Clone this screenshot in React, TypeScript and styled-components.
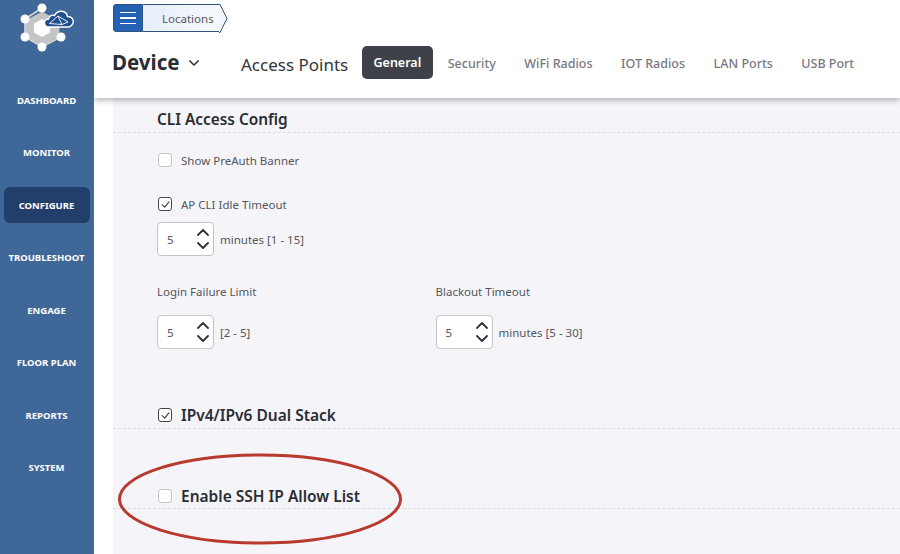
import React from 'react';
import styled, { createGlobalStyle } from 'styled-components';

const GlobalStyle = createGlobalStyle`
  html, body {
    margin: 0;
    padding: 0;
    height: 100%;
    overflow: hidden;
    background: #fff;
    font-family: 'Noto Sans', 'Open Sans', sans-serif;
  }
  * { box-sizing: border-box; }
`;

const NAV_ITEMS = ['DASHBOARD', 'MONITOR', 'CONFIGURE', 'TROUBLESHOOT', 'ENGAGE', 'FLOOR PLAN', 'REPORTS', 'SYSTEM'];
const TABS = ['General', 'Security', 'WiFi Radios', 'IOT Radios', 'LAN Ports', 'USB Port'];

const Logo = () => (
  <svg viewBox="10 0 70 56" width="70" height="56">
    <path d="M42 12 L59 21 L59 37 L42 46 L25 37 L25 21Z" fill="#c4c5c6" stroke="#b4b6b8" strokeWidth="1" />
    <path d="M42 19 L50 23.500 L50 32.500 L42 37 L34 32.500 L34 23.500Z" fill="#fff" />
    <path d="M42 8 L25 19 L25 37 L42 47 L61 37" fill="none" stroke="#d8d9d6" strokeWidth="1.5" />
    <g fill="#fff">
      <circle cx="42" cy="8" r="4.500" />
      <circle cx="25" cy="19" r="4.500" />
      <circle cx="25" cy="37" r="4.500" />
      <circle cx="61" cy="37" r="4.500" />
      <circle cx="42" cy="47" r="4.500" />
    </g>
    <path d="M49 27 C43 27 43 19.500 48.500 19 C49 15.500 52.500 14.500 54.500 15.500 C57.500 9.500 66 10 67.500 16.500 C72.500 16.500 74.500 21 72.500 24 C71.500 26 70 27 68 27 Z" fill="#1f4f8f" stroke="#fff" strokeWidth="1.400" />
    <path d="M49.500 23.500 L58 16 L62 24.500 L49.500 23.500 M58 16 L68 22 L62 24.500" fill="none" stroke="#fff" strokeWidth="0.900" />
  </svg>
);

const Chevron = ({ up }: { up?: boolean }) => (
  <svg viewBox="0 0 12 7" width="12" height="7" fill="none" stroke="#33353a" strokeWidth="1.8" strokeLinecap="round" strokeLinejoin="round">
    <path d={up ? 'M1 6 L6 1 L11 6' : 'M1 1 L6 6 L11 1'} />
  </svg>
);

const Stepper = ({ value }: { value: number }) => (
  <StepperBox>
    <span>{value}</span>
    <StepperArrows>
      <Chevron up />
      <Chevron />
    </StepperArrows>
  </StepperBox>
);

const Check = ({ checked }: { checked?: boolean }) => (
  <CheckBox $checked={checked}>
    {checked && (
      <svg viewBox="0 0 10 8" width="9" height="7" fill="none" stroke="#33353a" strokeWidth="1.2" strokeLinecap="round" strokeLinejoin="round">
        <path d="M1 4 L4 7 L9 1" />
      </svg>
    )}
  </CheckBox>
);

const App = () => (
  <Page>
    <GlobalStyle />
    <Sidebar>
      <LogoWrap><Logo /></LogoWrap>
      <Nav>
        {NAV_ITEMS.map((item) => (
          <NavItem key={item} $active={item === 'CONFIGURE'}>{item}</NavItem>
        ))}
      </Nav>
    </Sidebar>
    <Main>
      <Header>
        <Breadcrumb>
          <MenuButton>
            <span /><span /><span />
          </MenuButton>
          <Crumb>
            Locations
            <svg viewBox="0 0 9 29" width="9" height="29">
              <path d="M0 0.500 L1 0.500 L8 14.500 L1 28.500 L0 28.500" fill="#f2f6fc" stroke="#31527f" strokeWidth="1" />
            </svg>
          </Crumb>
        </Breadcrumb>
        <TabsRow>
          <DeviceTitle>
            Device
            <svg viewBox="0 0 12 7" width="10" height="6" fill="none" stroke="#2b2d33" strokeWidth="1.8" strokeLinecap="round" strokeLinejoin="round">
              <path d="M1 1 L6 6 L11 1" />
            </svg>
          </DeviceTitle>
          <SubTitle>Access Points</SubTitle>
          <Tabs>
            {TABS.map((tab) => (
              <Tab key={tab} $active={tab === 'General'}>{tab}</Tab>
            ))}
          </Tabs>
        </TabsRow>
      </Header>
      <Body>
        <Content>
          <SectionHead>
            <SectionTitle>CLI Access Config</SectionTitle>
          </SectionHead>
          <Fields>
            <CheckRow>
              <Check />
              Show PreAuth Banner
            </CheckRow>
            <CheckRow $top={26}>
              <Check checked />
              AP CLI Idle Timeout
            </CheckRow>
            <StepperRow $top={9}>
              <Stepper value={5} />
              minutes [1 - 15]
            </StepperRow>
            <TimeoutGrid>
              <div>
                <FieldLabel>Login Failure Limit</FieldLabel>
                <StepperRow $top={14}>
                  <Stepper value={5} />
                  [2 - 5]
                </StepperRow>
              </div>
              <div>
                <FieldLabel>Blackout Timeout</FieldLabel>
                <StepperRow $top={14}>
                  <Stepper value={5} />
                  minutes [5 - 30]
                </StepperRow>
              </div>
            </TimeoutGrid>
          </Fields>
          <BoldHead $top={56} $height={24}>
            <Check checked />
            <BoldLabel>IPv4/IPv6 Dual Stack</BoldLabel>
          </BoldHead>
          <BoldHead $top={57} $height={23}>
            <Check />
            <BoldLabel>Enable SSH IP Allow List</BoldLabel>
          </BoldHead>
        </Content>
      </Body>
    </Main>
    <Highlight viewBox="0 0 290 96" width="290" height="96">
      <ellipse cx="145" cy="48" rx="140.500" ry="44" fill="none" stroke="#b8392e" strokeWidth="3" />
    </Highlight>
  </Page>
);

const Page = styled.div`
  position: relative;
  display: flex;
  width: 900px;
  height: 554px;
  overflow: hidden;
  background: #fff;
`;

const Sidebar = styled.aside`
  width: 94px;
  flex: none;
  background: #3f6797;
  border-right: 1px solid #4a6e9c;
`;

const LogoWrap = styled.div`
  height: 82px;
  padding-left: 10px;
`;

const Nav = styled.nav`
  display: flex;
  flex-direction: column;
  align-items: center;
`;

const NavItem = styled.div<{ $active?: boolean }>`
  width: 86px;
  height: 36px;
  margin-bottom: 16.500px;
  display: flex;
  align-items: center;
  justify-content: center;
  border-radius: 6px;
  background: ${(p) => (p.$active ? '#223f6b' : 'transparent')};
  color: #fff;
  font-size: 9.500px;
  font-weight: 700;
  white-space: nowrap;
`;

const Main = styled.main`
  flex: 1;
  min-width: 0;
  display: flex;
  flex-direction: column;
`;

const Header = styled.header`
  position: relative;
  z-index: 1;
  height: 98px;
  flex: none;
  padding: 4px 0 0 19px;
  background: #fff;
  box-shadow: 0 2px 6px rgba(60, 60, 70, 0.4);
`;

const Breadcrumb = styled.div`
  display: flex;
  height: 28px;
`;

const MenuButton = styled.div`
  width: 30px;
  height: 28px;
  display: flex;
  flex-direction: column;
  align-items: center;
  justify-content: center;
  gap: 4px;
  background: #2460b4;
  border: 1px solid #31527f;
  border-radius: 3px 0 0 3px;

  span {
    width: 16px;
    height: 1.500px;
    background: #fff;
  }
`;

const Crumb = styled.div`
  position: relative;
  width: 76px;
  height: 28px;
  padding-left: 19px;
  display: flex;
  align-items: center;
  background: linear-gradient(90deg, #e6eef9, #f6f9fd);
  border-top: 1px solid #31527f;
  border-bottom: 1px solid #31527f;
  color: #54575d;
  font-size: 11.500px;

  svg {
    position: absolute;
    top: -1px;
    left: 100%;
  }
`;

const TabsRow = styled.div`
  display: flex;
  align-items: center;
  margin-top: 13px;
  height: 36px;
`;

const DeviceTitle = styled.div`
  width: 129px;
  margin-left: -1px;
  margin-top: -3px;
  display: flex;
  align-items: center;
  gap: 9px;
  color: #2b2d33;
  font-size: 20.500px;
  font-weight: 700;

  svg {
    margin-top: 3px;
  }
`;

const SubTitle = styled.div`
  width: 121px;
  padding-top: 3px;
  color: #33353a;
  font-size: 17px;
  white-space: nowrap;
`;

const Tabs = styled.div`
  display: flex;
  align-items: center;
`;

const Tab = styled.div<{ $active?: boolean }>`
  height: ${(p) => (p.$active ? '33px' : 'auto')};
  margin-top: ${(p) => (p.$active ? '-2px' : '0')};
  margin-right: ${(p) => (p.$active ? '15px' : '28.500px')};
  padding: 0 ${(p) => (p.$active ? '11.500px' : '0')};
  display: flex;
  align-items: center;
  border-radius: 5px;
  background: ${(p) => (p.$active ? '#3f4149' : 'transparent')};
  color: ${(p) => (p.$active ? '#fff' : '#77797f')};
  font-size: 12.500px;
  font-weight: ${(p) => (p.$active ? 600 : 500)};
  white-space: nowrap;
`;

const Body = styled.div`
  flex: 1;
  min-height: 0;
  padding-left: 19px;
  background: #fff;
`;

const Content = styled.div`
  height: 100%;
  background: #f5f5f9;
`;

const SectionHead = styled.div`
  height: 35px;
  padding: 11px 0 0 44px;
  border-bottom: 1px dashed #dcdce2;
`;

const SectionTitle = styled.h2`
  margin: 0;
  color: #2b2d33;
  font-size: 15.400px;
  font-weight: 600;
  line-height: 22px;
`;

const Fields = styled.div`
  padding: 18px 0 0 44px;
  color: #54565c;
  font-size: 11.500px;
`;

const CheckRow = styled.div<{ $top?: number }>`
  display: flex;
  align-items: center;
  gap: 9px;
  height: 18px;
  margin-top: ${(p) => p.$top ?? 0}px;
`;

const CheckBox = styled.span<{ $checked?: boolean }>`
  width: 14px;
  height: 14px;
  margin-left: 1px;
  flex: none;
  display: flex;
  align-items: center;
  justify-content: center;
  border-radius: 3px;
  border: 1px solid ${(p) => (p.$checked ? '#44464c' : '#c4c5cb')};
  background: #fff;
`;

const StepperRow = styled.div<{ $top?: number }>`
  display: flex;
  align-items: center;
  gap: 6px;
  margin-top: ${(p) => p.$top ?? 0}px;
`;

const StepperBox = styled.div`
  width: 57px;
  height: 34px;
  padding: 0 4px 0 9px;
  display: flex;
  align-items: center;
  justify-content: space-between;
  background: #fff;
  border: 1px solid #c4c5cb;
  border-radius: 4px;
`;

const StepperArrows = styled.div`
  display: flex;
  flex-direction: column;
  gap: 6px;
  line-height: 0;
`;

const TimeoutGrid = styled.div`
  display: grid;
  grid-template-columns: 278.500px 1fr;
  margin-top: 27px;
`;

const FieldLabel = styled.div`
  height: 18px;
  line-height: 18px;
`;

const BoldHead = styled.div<{ $top: number; $height: number }>`
  height: ${(p) => p.$height}px;
  margin-top: ${(p) => p.$top}px;
  padding-left: 44px;
  display: flex;
  align-items: flex-start;
  gap: 9px;
  border-bottom: 1px dashed #dcdce2;

  > span {
    margin-top: 3px;
  }
`;

const BoldLabel = styled.div`
  color: #2b2d33;
  font-size: 15.500px;
  font-weight: 600;
  line-height: 20px;
`;

const Highlight = styled.svg`
  position: absolute;
  left: 115px;
  top: 451px;
`;

export default App;
